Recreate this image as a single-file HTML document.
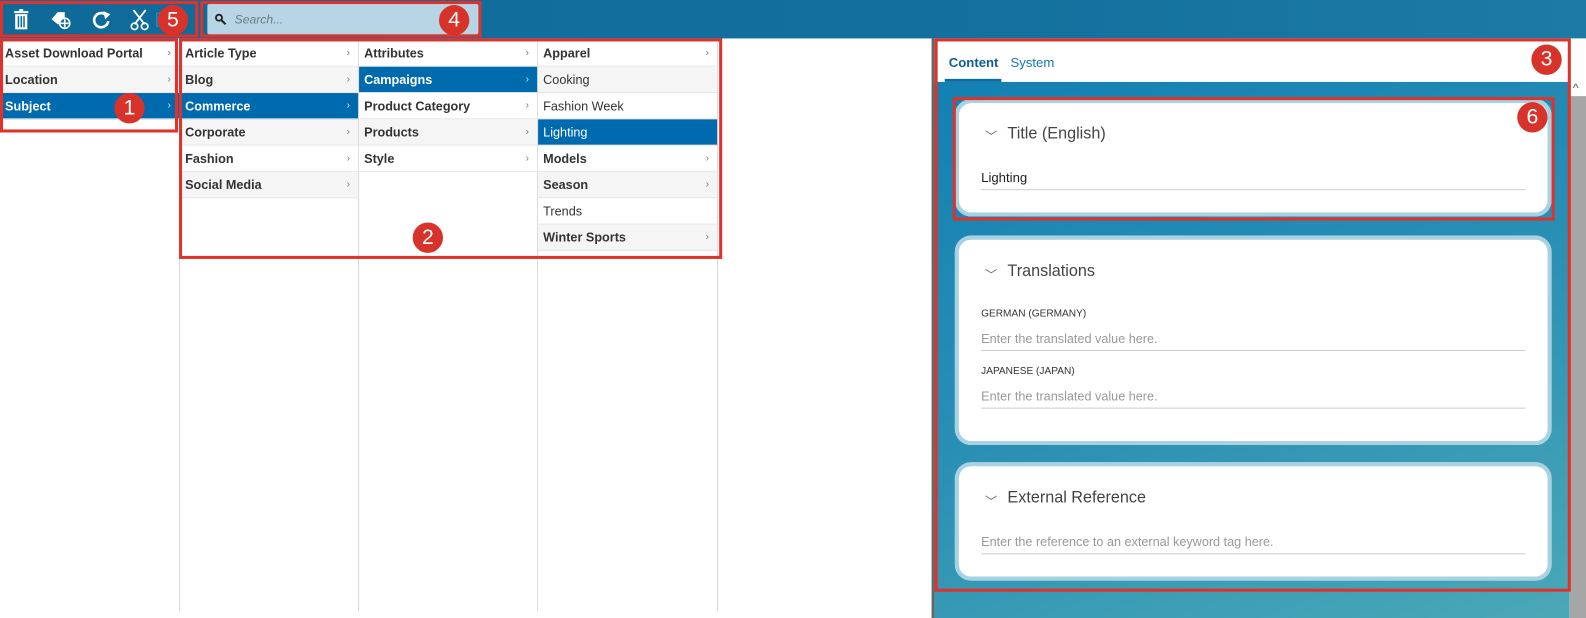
<!DOCTYPE html>
<html><head><meta charset="utf-8">
<style>
*{box-sizing:border-box;margin:0;padding:0}
body{width:1586px;height:611px;overflow:hidden;background:#fff;font-family:"Liberation Sans",sans-serif;position:relative}
#w{position:absolute;left:0;top:0;width:1568px;height:604px;transform:scale(1.01148);transform-origin:0 0}
.abs{position:absolute}
.top{left:0;top:0;width:1568px;height:38px;background:linear-gradient(90deg,#0f6a9a,#13709e 60%,#1d7aa5)}
.col{position:absolute;top:40px;bottom:0;border-right:1px solid #d8d8d8}
.row{height:26px;line-height:26px;font-size:12.5px;color:#333;padding-left:5px;border-bottom:1px solid #e6e6e6;position:relative;background:#fff}
.row.g{background:#f5f5f5}
.row.b{font-weight:bold}
.row.s{background:#006aaf;color:#fff}
.row .a{position:absolute;right:8px;top:0;font-size:10px;color:#777;font-weight:normal}
.row.s .a{color:#cfe3f0}
.red{position:absolute;border:3px solid #e0322a}
.num{position:absolute;width:30px;height:30px;border-radius:50%;background:#d8332a;color:#fff;font-size:21px;text-align:center;line-height:30px}
.card{position:absolute;left:944px;width:590px;background:#fff;border-radius:16px;box-shadow:0 0 0 4px #a8d2e2 inset}
.ct{position:absolute;left:52px;font-size:16px;color:#444}
.chev{position:absolute;left:30px;font-size:12px;color:#666}
.lbl{position:absolute;left:26px;font-size:10px;color:#333}
.ph{position:absolute;left:26px;width:538px;font-size:12.5px;color:#999;border-bottom:1px solid #ccc;padding-bottom:4px}
</style></head><body><div id="w">
<div class="abs top"></div>
<svg class="abs" style="left:10px;top:8px" width="160" height="24" viewBox="0 0 160 24">
 <g fill="#fff">
  <rect x="4" y="3" width="14" height="2"/><rect x="9" y="1" width="4" height="2"/>
  <rect x="5" y="6" width="12" height="15"/>
 </g>
 <g fill="#0f6a9a"><rect x="7.5" y="8" width="1.5" height="11"/><rect x="10.3" y="8" width="1.5" height="11"/><rect x="13" y="8" width="1.5" height="11"/></g>
 <path d="M41 11 L47 4 H54 V16 H47 Z" fill="#fff"/>
 <circle cx="54" cy="15" r="5" fill="#0f6a9a" stroke="#fff" stroke-width="1.6"/>
 <path d="M54 11v8M50 15h8" stroke="#fff" stroke-width="1.6"/>
 <path d="M95 7 A7 7 0 1 0 97 13" fill="none" stroke="#fff" stroke-width="2.6"/>
 <path d="M92 3 L99 6 L94 11 Z" fill="#fff"/>
 <path d="M122 2 L133 16 M134 2 L123 16" stroke="#fff" stroke-width="1.8"/>
 <circle cx="123" cy="18" r="3.2" fill="none" stroke="#fff" stroke-width="1.6"/>
 <circle cx="133" cy="18" r="3.2" fill="none" stroke="#fff" stroke-width="1.6"/>
 <rect x="145" y="5" width="10" height="13" fill="none" stroke="#4f8db5" stroke-width="1"/>
</svg>
<div class="abs" style="left:205px;top:4px;width:268px;height:30px;background:#b7d5e4;border-radius:2px"></div>
<svg class="abs" style="left:212px;top:13px" width="12" height="12" viewBox="0 0 12 12"><circle cx="4.5" cy="4.5" r="3" fill="none" stroke="#222" stroke-width="1.8"/><path d="M7 7l4 4" stroke="#222" stroke-width="2"/></svg>
<div class="abs" style="left:232px;top:12px;font-size:12px;color:#6a7a85;font-style:italic">Search...</div>

<div class="col" style="left:0;width:178px">
 <div class="row b">Asset Download Portal<span class="a">›</span></div>
 <div class="row b g">Location<span class="a">›</span></div>
 <div class="row b s">Subject<span class="a">›</span></div>
</div>
<div class="col" style="left:178px;width:177px">
 <div class="row b">Article Type<span class="a">›</span></div>
 <div class="row b g">Blog<span class="a">›</span></div>
 <div class="row b s">Commerce<span class="a">›</span></div>
 <div class="row b g">Corporate<span class="a">›</span></div>
 <div class="row b">Fashion<span class="a">›</span></div>
 <div class="row b g">Social Media<span class="a">›</span></div>
</div>
<div class="col" style="left:355px;width:177px">
 <div class="row b">Attributes<span class="a">›</span></div>
 <div class="row b s">Campaigns<span class="a">›</span></div>
 <div class="row b">Product Category<span class="a">›</span></div>
 <div class="row b g">Products<span class="a">›</span></div>
 <div class="row b">Style<span class="a">›</span></div>
</div>
<div class="col" style="left:532px;width:178px">
 <div class="row b">Apparel<span class="a">›</span></div>
 <div class="row g">Cooking</div>
 <div class="row">Fashion Week</div>
 <div class="row s">Lighting</div>
 <div class="row b">Models<span class="a">›</span></div>
 <div class="row b g">Season<span class="a">›</span></div>
 <div class="row">Trends</div>
 <div class="row b g">Winter Sports<span class="a">›</span></div>
</div>

<div class="abs" style="left:921px;top:38px;width:3px;height:573px;background:#666"></div>
<div class="abs" style="left:924px;top:38px;width:628px;height:43px;background:#fff"></div>
<div class="abs" style="left:938px;top:54px;font-size:13px;color:#0d5f94;font-weight:bold">Content</div>
<div class="abs" style="left:999px;top:54px;font-size:13px;color:#1478b4">System</div>
<div class="abs" style="left:934px;top:78px;width:56px;height:3px;background:#0d69a8"></div>
<div class="abs" style="left:924px;top:81px;width:628px;height:530px;background:linear-gradient(160deg,#1380b3 0%,#2a8fb4 50%,#4aa8b6 100%)"></div>
<div class="abs" style="left:1552px;top:38px;width:16px;height:573px;background:#fff"></div>
<div class="abs" style="left:1552px;top:95px;width:16px;height:516px;background:#a6a6a6"></div>
<div class="abs" style="left:1555px;top:80px;font-size:12px;color:#555">^</div>

<div class="card" style="top:98px;height:116px">
 <span class="chev" style="top:28px">﹀</span><span class="ct" style="top:26px">Title (English)</span>
 <div class="ph" style="top:70px;color:#222;font-size:13px">Lighting</div>
</div>
<div class="card" style="top:233px;height:207px">
 <span class="chev" style="top:30px">﹀</span><span class="ct" style="top:27px">Translations</span>
 <div class="lbl" style="top:72px">GERMAN (GERMANY)</div>
 <div class="ph" style="top:95px">Enter the translated value here.</div>
 <div class="lbl" style="top:129px">JAPANESE (JAPAN)</div>
 <div class="ph" style="top:152px">Enter the translated value here.</div>
</div>
<div class="card" style="top:457px;height:117px">
 <span class="chev" style="top:30px">﹀</span><span class="ct" style="top:27px">External Reference</span>
 <div class="ph" style="top:72px">Enter the reference to an external keyword tag here.</div>
</div>

<div class="red" style="left:0;top:38px;width:176px;height:93px"></div>
<div class="red" style="left:177px;top:38px;width:537px;height:218px"></div>
<div class="red" style="left:924px;top:38px;width:629px;height:547px"></div>
<div class="red" style="left:198px;top:1px;width:278px;height:36px"></div>
<div class="red" style="left:0;top:1px;width:196px;height:36px"></div>
<div class="red" style="left:942px;top:96px;width:595px;height:122px"></div>
<div class="num" style="left:113px;top:92px">1</div>
<div class="num" style="left:408px;top:220px">2</div>
<div class="num" style="left:1514px;top:44px">3</div>
<div class="num" style="left:434px;top:5px">4</div>
<div class="num" style="left:156px;top:5px">5</div>
<div class="num" style="left:1500px;top:101px">6</div>
</div></body></html>
